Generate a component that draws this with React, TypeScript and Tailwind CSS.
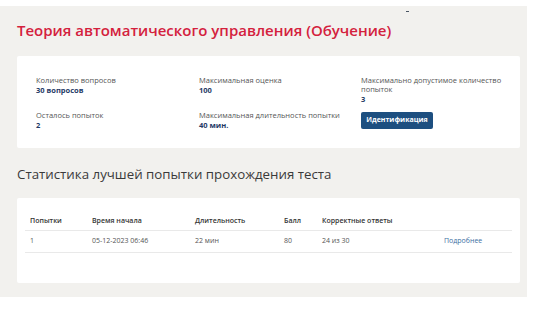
import React from "react";

const info = [
  { label: "Количество вопросов", value: "30 вопросов" },
  { label: "Максимальная оценка", value: "100" },
  { label: "Максимально допустимое количество попыток", value: "3" },
  { label: "Осталось попыток", value: "2" },
  { label: "Максимальная длительность попытки", value: "40 мин." },
];

const cols = ["Попытки", "Время начала", "Длительность", "Балл", "Корректные ответы", ""];
const widths = ["w-[62px]", "w-[103px]", "w-[89px]", "w-[38px]", "w-[122px]", ""];

export default function App() {
  const row = ["1", "05-12-2023 06:46", "22 мин", "80", "24 из 30"];

  return (
    <div className="relative min-h-screen bg-white font-['Open_Sans',sans-serif]">
      <div className="absolute left-[406px] top-[5px] h-px w-[3px] bg-[#4a5563]" />

      <div className="mt-[6px] w-[527px] bg-[#f2f1ee] pb-[14px] pl-[17px] pr-[7px] pt-[13px]">
        <h1 className="text-[15px] font-semibold leading-[22px] text-[#d4213d]">
          Теория автоматического управления (Обучение)
        </h1>

        {/* INFO CARD */}
        <div className="mt-[15px] h-[92px] rounded-[2px] bg-white pl-[19px] pt-[20px]">
          <div className="grid grid-cols-[163px_162px_1fr] gap-y-[7px]">
            {info.slice(0, 3).map((i) => (
              <div key={i.label}>
                <p className="max-w-[150px] text-[7.5px] leading-[9px] text-[#555]">{i.label}</p>
                <p className="text-[7.5px] font-bold leading-[10px] text-[#1f3a66]">{i.value}</p>
              </div>
            ))}
            {info.slice(3).map((i) => (
              <div key={i.label}>
                <p className="text-[7.5px] leading-[9px] text-[#555]">{i.label}</p>
                <p className="text-[7.5px] font-bold leading-[10px] text-[#1f3a66]">{i.value}</p>
              </div>
            ))}
            <div>
              <button className="mt-[1px] block h-[17px] w-[72px] rounded-[2px] bg-[#1d4f80] text-[7px] font-bold text-white">
                Идентификация
              </button>
            </div>
          </div>
        </div>

        <h2 className="mt-[16px] text-[13.3px] leading-[20px] text-[#3a3a3a]">
          Статистика лучшей попытки прохождения теста
        </h2>

        {/* TABLE CARD */}
        <div className="mt-[14px] h-[85px] rounded-[2px] bg-white px-[8px] pt-[15px]">
          <div className="flex h-[18px] items-center border-b border-[#e9e9e9] text-[7px] font-semibold text-[#333]">
            {cols.map((c, idx) => (
              <div key={idx} className={`${widths[idx]} pl-[5px]`}>
                {c}
              </div>
            ))}
          </div>
          <div className="flex h-[22px] items-center border-b border-[#e9e9e9] text-[7px] text-[#555]">
            {row.map((c, idx) => (
              <div key={idx} className={`${widths[idx]} pl-[5px]`}>
                {c}
              </div>
            ))}
            <div className="pl-[5px] text-[#3d6fa3]">Подробнее</div>
          </div>
        </div>
      </div>
    </div>
  );
}
